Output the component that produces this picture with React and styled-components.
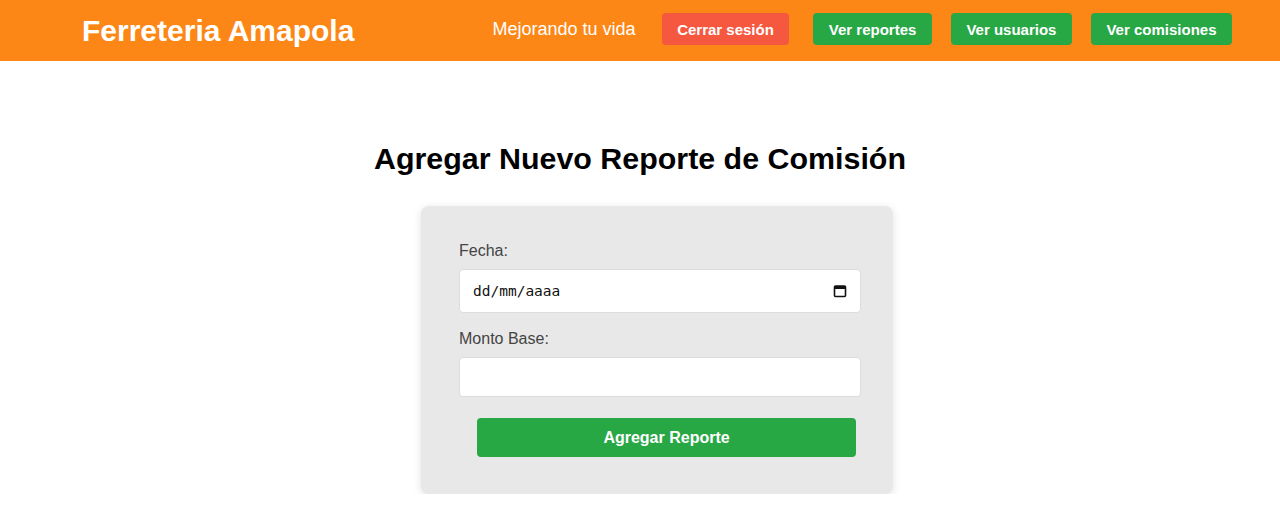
import styled, { createGlobalStyle } from 'styled-components';

const GlobalStyle = createGlobalStyle`
  body {
    margin: 0;
    background: #fff;
    font-family: 'Liberation Sans', Arial, sans-serif;
  }
`;

const Header = styled.header`
  display: flex;
  align-items: center;
  justify-content: space-between;
  height: 61px;
  padding: 0 48px 0 82px;
  background-color: #fd8716;
  color: #fff;
`;

const Brand = styled.h1`
  margin: 0;
  font-size: 30px;
  font-weight: 700;
`;

const Nav = styled.nav`
  display: flex;
  align-items: center;
  padding-bottom: 3px;
`;

const Tagline = styled.span`
  font-size: 18px;
  margin-right: 26px;
`;

const NavButton = styled.button`
  height: 32px;
  padding: 0 15.5px;
  margin-left: ${p => (p.$first ? '0' : p.$wide ? '24px' : '19px')};
  border: none;
  border-radius: 4px;
  background-color: ${p => (p.$danger ? '#f5583f' : '#28a745')};
  color: #fff;
  font-family: inherit;
  font-size: 15px;
  font-weight: 700;
  cursor: pointer;
`;

const Main = styled.main`
  padding-top: 80px;
`;

const Title = styled.h2`
  margin: 0 0 30px;
  text-align: center;
  font-size: 30.4px;
  font-weight: 700;
  color: #000;
`;

const Card = styled.form`
  box-sizing: border-box;
  width: 472px;
  margin-left: calc(50% - 219px);
  padding: 36px 32px 37px 38px;
  background-color: #e8e8e8;
  border-radius: 8px;
  box-shadow: 0 2px 8px rgba(0, 0, 0, 0.12);
`;

const Label = styled.label`
  display: block;
  font-size: 16px;
  line-height: 18px;
  color: #444;
  margin-bottom: 9px;
`;

const Field = styled.div`
  display: flex;
  align-items: center;
  box-sizing: border-box;
  height: ${p => p.$h}px;
  margin-bottom: ${p => p.$mb}px;
  padding: 0 13px;
  background: #fff;
  border: 1px solid #dcdcdc;
  border-radius: 4px;
`;

const TextInput = styled.input`
  flex: 1;
  min-width: 0;
  border: none;
  outline: none;
  background: transparent;
  font-family: ${p => (p.$mono ? "'DejaVu Sans Mono', monospace" : 'inherit')};
  font-size: ${p => (p.$mono ? '14.5px' : '16px')};
  color: #000;
  padding: 0;
  &::placeholder {
    color: #111;
  }
`;

const Submit = styled.button`
  display: block;
  box-sizing: border-box;
  width: 379px;
  height: 39px;
  margin-left: 18px;
  border: none;
  border-radius: 4px;
  background-color: #28a745;
  color: #fff;
  font-family: inherit;
  font-size: 16px;
  font-weight: 700;
`;

const CalendarIcon = () => (
  <svg width="14" height="14" viewBox="0 0 14 14" fill="none">
    <rect x="1.5" y="2" width="11" height="10.5" rx="1" stroke="#111" strokeWidth="1.6" />
    <rect x="1.5" y="2" width="11" height="3" fill="#111" />
  </svg>
);

export default function App() {
  return (
    <>
      <GlobalStyle />
      <Header>
        <Brand>Ferreteria Amapola</Brand>
        <Nav>
          <Tagline>Mejorando tu vida</Tagline>
          <NavButton $first $danger>Cerrar sesión</NavButton>
          <NavButton $wide>Ver reportes</NavButton>
          <NavButton>Ver usuarios</NavButton>
          <NavButton>Ver comisiones</NavButton>
        </Nav>
      </Header>
      <Main>
        <Title>Agregar Nuevo Reporte de Comisión</Title>
        <Card onSubmit={e => e.preventDefault()}>
          <Label htmlFor="fecha">Fecha:</Label>
          <Field $h={44} $mb={17}>
            <TextInput id="fecha" $mono placeholder="dd/mm/aaaa" />
            <CalendarIcon />
          </Field>
          <Label htmlFor="monto">Monto Base:</Label>
          <Field $h={40} $mb={21}>
            <TextInput id="monto" type="number" />
          </Field>
          <Submit type="submit">Agregar Reporte</Submit>
        </Card>
      </Main>
    </>
  );
}
